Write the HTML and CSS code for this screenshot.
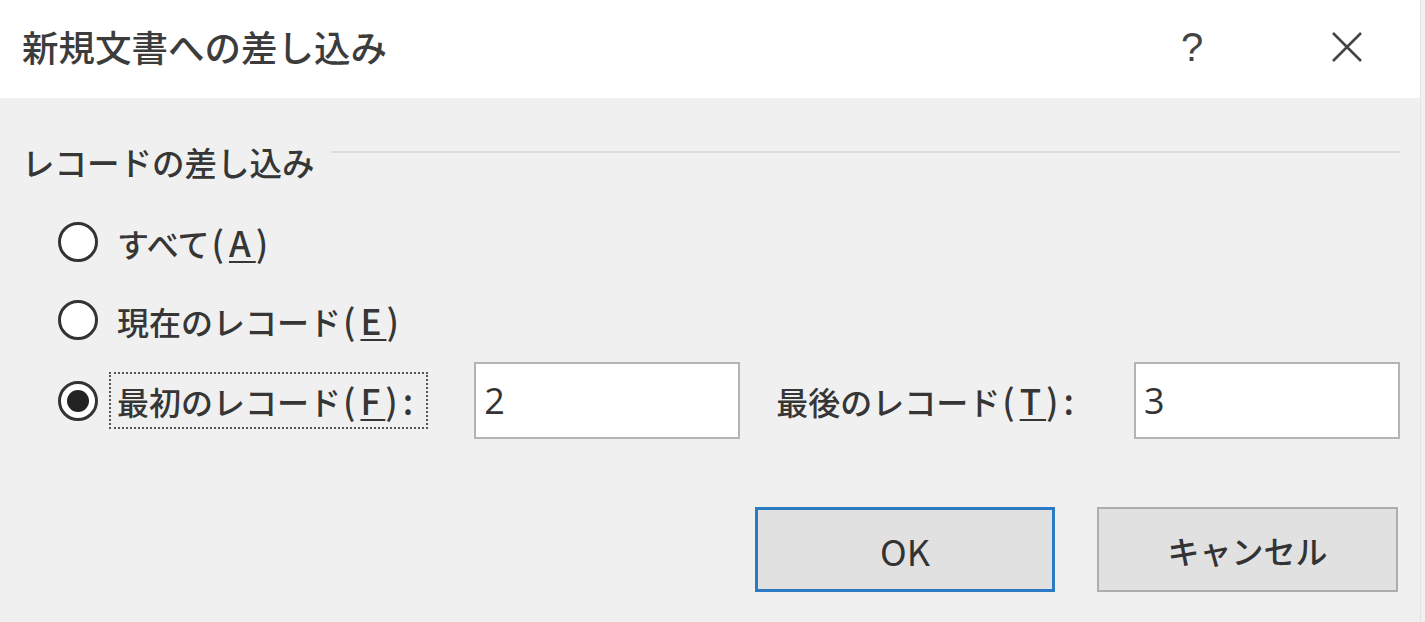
FILE: index.html
```html
<!DOCTYPE html>
<html lang="ja">
<head>
    <meta charset="UTF-8">
    <meta name="viewport" content="width=device-width, initial-scale=1.0">
    <title>新規文書への差し込み</title>
    <link rel="stylesheet" href="styles.css">
</head>
<body>
    <div class="dialog">
        <div class="titlebar">
            <span class="title">新規文書への差し込み</span>
            <div class="caption">
                <span class="help">?</span>
                <svg class="close" width="32" height="32" viewBox="0 0 32 32">
                    <path d="M2 2 L30 30 M30 2 L2 30" stroke="#444" stroke-width="2.6" fill="none"/>
                </svg>
            </div>
        </div>

        <div class="content">
            <div class="group-head">
                <span class="group-label">レコードの差し込み</span>
                <div class="rule"></div>
            </div>

            <div class="options">
                <div class="opt">
                    <span class="radio"></span>
                    <span class="opt-text">すべて<span class="acc">(<u>A</u>)</span></span>
                </div>
                <div class="opt">
                    <span class="radio"></span>
                    <span class="opt-text">現在のレコード<span class="acc">(<u>E</u>)</span></span>
                </div>
                <div class="opt range">
                    <span class="radio checked"></span>
                    <span class="opt-text focus">最初のレコード<span class="acc">(<u>F</u>):</span></span>
                    <input type="text" class="field" value="2">
                    <span class="opt-text last-label">最後のレコード<span class="acc">(<u>T</u>):</span></span>
                    <input type="text" class="field field-last" value="3">
                </div>
            </div>

            <div class="buttons">
                <button class="btn default">OK</button>
                <button class="btn">キャンセル</button>
            </div>
        </div>
    </div>
</body>
</html>
```

FILE: styles.css
```css
body {
    margin: 0;
    background-color: #f0f0f0;
    font-family: "Noto Sans CJK JP", "Noto Sans", sans-serif;
    color: #363636;
}
.dialog {
    width: 1420px;
    height: 622px;
    overflow: hidden;
    border-right: 1px solid #e4e4e4;
}
.titlebar {
    height: 98px;
    background: white;
    display: flex;
    align-items: center;
    justify-content: space-between;
    padding-left: 22px;
}
.title {
    font-size: 36.5px;
    font-weight: 500;
    color: #3c3c3c;
    margin-top: -6px;
}
.caption {
    display: flex;
    align-items: center;
    margin-top: -4px;
}
.help {
    font-family: "Liberation Sans", sans-serif;
    font-size: 40px;
    color: #444;
    width: 20px;
    margin-right: 130px;
}
.close {
    margin-right: 57px;
}
.content {
    padding: 44px 20px 0 22px;
}
.group-head {
    display: flex;
    align-items: flex-start;
    height: 40px;
}
.group-label {
    font-size: 32.5px;
    font-weight: 500;
    line-height: 40px;
}
.rule {
    flex: 1;
    height: 2px;
    background: #dcdcdc;
    margin: 9px 0 0 16px;
}
.options {
    margin-top: 21px;
    padding-left: 36px;
}
.opt {
    display: flex;
    align-items: center;
    height: 78px;
}
.opt.range {
    height: 77px;
    margin-top: 3px;
}
.radio {
    width: 34px;
    height: 34px;
    border: 3px solid #333;
    border-radius: 50%;
    background: white;
    margin-right: 19px;
    position: relative;
    flex-shrink: 0;
}
.radio.checked::after {
    content: "";
    position: absolute;
    left: 6px;
    top: 6px;
    width: 22px;
    height: 22px;
    border-radius: 50%;
    background: #222;
}
.opt-text {
    font-size: 32px;
    font-weight: 500;
    line-height: 40px;
}
.acc {
    font-size: 35px;
    letter-spacing: 5px;
    margin-left: 2px;
}
.acc u {
    text-underline-offset: 4px;
    text-decoration-thickness: 2px;
}
.focus {
    border: 2px dotted #555;
    padding: 6px 8px 6px 6px;
    margin-left: -8px;
}
.field {
    width: 266px;
    height: 77px;
    box-sizing: border-box;
    border: 2px solid #b4b4b4;
    background: white;
    font-family: "Open Sans", sans-serif;
    font-size: 36px;
    color: #333;
    padding: 0 8px;
    margin-left: 46px;
    outline: none;
}
.last-label {
    margin-left: 36px;
}
.field-last {
    margin-left: auto;
}
.buttons {
    display: flex;
    justify-content: flex-end;
    gap: 42px;
    margin-top: 68px;
    padding-right: 2px;
}
.btn {
    width: 301px;
    height: 85px;
    background: #e1e1e1;
    border: 2px solid #adadad;
    font-family: "Noto Sans CJK JP", "Noto Sans", sans-serif;
    font-size: 32px;
    font-weight: 500;
    color: #333;
    padding: 0;
}
.btn.default {
    border: 3px solid #2b7bc4;
    width: 300px;
    font-size: 36px;
    font-weight: 400;
}
```
